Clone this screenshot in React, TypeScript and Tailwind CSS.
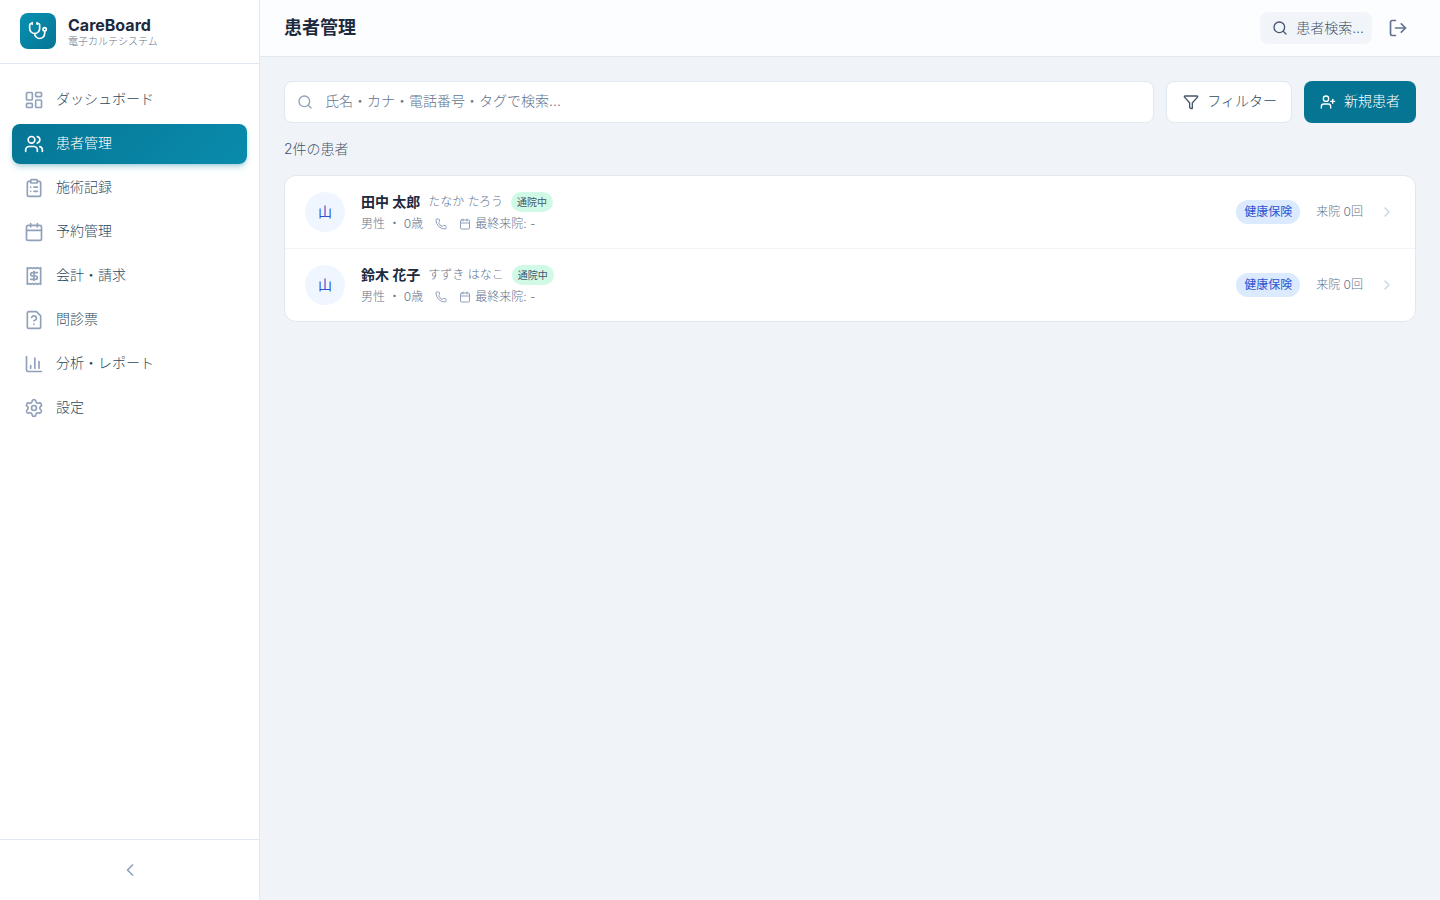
import {
  Calendar,
  ChevronLeft,
  ChevronRight,
  ClipboardList,
  Funnel,
  LayoutDashboard,
  LogOut,
  Phone,
  Search,
  Settings,
  Stethoscope,
  UserPlus,
  Users,
} from "lucide-react";
import { useState } from "react";
import type { ReactNode } from "react";
import clsx from "clsx";

type Patient = {
  id: string;
  name: string;
  kana: string;
  gender: string;
  age: number;
  status: string;
  insurance: string;
  lastVisit?: string;
  visits: number;
};

const PATIENTS: Patient[] = [
  { id: "p1", name: "田中 太郎", kana: "たなか たろう", gender: "男性", age: 0, status: "通院中", insurance: "健康保険", visits: 0 },
  { id: "p2", name: "鈴木 花子", kana: "すずき はなこ", gender: "男性", age: 0, status: "通院中", insurance: "健康保険", visits: 0 },
];

function LineIcon({ children }: { children: ReactNode }) {
  return (
    <svg viewBox="0 0 24 24" className="size-5" fill="none" stroke="currentColor" strokeWidth="2" strokeLinecap="round" strokeLinejoin="round" aria-hidden="true">
      {children}
    </svg>
  );
}

// receipt with a dollar sign
function BillingIcon() {
  return (
    <LineIcon>
      <path d="M4 2v20l2-1 2 1 2-1 2 1 2-1 2 1 2-1 2 1V2l-2 1-2-1-2 1-2-1-2 1-2-1-2 1Z" />
      <path d="M16 8h-6a2 2 0 1 0 0 4h4a2 2 0 1 1 0 4H8" />
      <path d="M12 17.5V6.5" />
    </LineIcon>
  );
}

function QuestionnaireIcon() {
  return (
    <LineIcon>
      <path d="M15 2H6a2 2 0 0 0-2 2v16a2 2 0 0 0 2 2h12a2 2 0 0 0 2-2V7Z" />
      <path d="M9.1 9a3 3 0 0 1 5.82 1c0 2-3 3-3 3" />
      <path d="M12 17h.01" />
    </LineIcon>
  );
}

function AnalyticsIcon() {
  return (
    <LineIcon>
      <path d="M3 3v16a2 2 0 0 0 2 2h16" />
      <path d="M18 17V9" />
      <path d="M13 17V5" />
      <path d="M8 17v-3" />
    </LineIcon>
  );
}

const NAV = [
  { id: "dashboard", label: "ダッシュボード", icon: <LayoutDashboard className="size-5" /> },
  { id: "patients", label: "患者管理", icon: <Users className="size-5" /> },
  { id: "records", label: "施術記録", icon: <ClipboardList className="size-5" /> },
  { id: "calendar", label: "予約管理", icon: <Calendar className="size-5" /> },
  { id: "billing", label: "会計・請求", icon: <BillingIcon /> },
  { id: "questionnaire", label: "問診票", icon: <QuestionnaireIcon /> },
  { id: "analytics", label: "分析・レポート", icon: <AnalyticsIcon /> },
  { id: "settings", label: "設定", icon: <Settings className="size-5" /> },
];

function Sidebar() {
  return (
    <aside className="sticky top-0 flex h-screen w-65 shrink-0 flex-col border-r border-slate-200 bg-white">
      <div className="flex h-16 items-center gap-3 border-b border-slate-200 px-5 pb-px">
        <div className="flex size-9 items-center justify-center rounded-lg bg-linear-135 from-[#0891b2] to-[#067594] text-white">
          <Stethoscope className="size-5" />
        </div>
        <div>
          <div className="text-base leading-5 font-bold text-slate-800">CareBoard</div>
          <div className="text-[10px] leading-3 font-light text-slate-500">電子カルテシステム</div>
        </div>
      </div>

      <nav className="flex flex-1 flex-col gap-1 px-3 py-4">
        {NAV.map((item) => {
          const active = item.id === "patients";
          return (
            <a
              key={item.id}
              href={`#${item.id}`}
              aria-current={active ? "page" : undefined}
              className={clsx(
                "flex h-10 items-center gap-3 rounded-lg px-3 text-sm font-light",
                active ? "bg-linear-135 from-[#067594] to-[#0a8cad] text-white shadow-md shadow-cyan-700/25" : "text-[#2c4a60] hover:bg-slate-50",
              )}
            >
              <span className={active ? "text-white" : "text-slate-400"}>{item.icon}</span>
              <span className="pb-0.5">{item.label}</span>
            </a>
          );
        })}
      </nav>

      <div className="border-t border-slate-200 p-3">
        <button type="button" aria-label="サイドバーを閉じる" className="flex h-9 w-full items-center justify-center rounded-lg text-slate-400 hover:bg-slate-50">
          <ChevronLeft className="size-5" />
        </button>
      </div>
    </aside>
  );
}

function PatientRow({ patient }: { patient: Patient }) {
  return (
    <li>
      <a href={`#patients/${patient.id}`} className="flex items-center gap-4 px-5 py-4 hover:bg-slate-50">
        <span className="flex size-10 shrink-0 items-center justify-center rounded-full bg-blue-50 text-sm text-[#3155cf]">山</span>
        <div className="min-w-0 flex-1">
          <div className="flex items-center gap-2">
            <span className="text-sm font-bold text-slate-800">{patient.name}</span>
            <span className="text-xs font-light text-slate-500">{patient.kana}</span>
            <span className="rounded-full bg-emerald-100 px-1.5 text-[10px] leading-5 text-slate-600">{patient.status}</span>
          </div>
          <div className="mt-1 flex items-center gap-3 text-xs font-light text-slate-500">
            <span>{patient.gender} ・ {patient.age}歳</span>
            <Phone className="size-3 text-slate-400" />
            <span className="flex items-center gap-1">
              <Calendar className="size-3 text-slate-400" />
              最終来院: {patient.lastVisit ?? "-"}
            </span>
          </div>
        </div>
        <span className="rounded-full bg-blue-100 px-2 py-1 text-xs text-[#3155cf]">{patient.insurance}</span>
        <span className="text-xs font-light text-slate-500">来院 {patient.visits}回</span>
        <ChevronRight className="size-4 text-slate-300" />
      </a>
    </li>
  );
}

export default function App() {
  const [query, setQuery] = useState("");
  const patients = PATIENTS.filter((p) => (p.name + p.kana).includes(query));

  return (
    <div className="flex min-h-screen bg-[#f0f4f8] font-['Inter','Noto_Sans_CJK_JP',sans-serif]">
      <Sidebar />

      <div className="min-w-0 flex-1">
        <header className="flex items-center justify-between border-b border-slate-200 bg-[#fcfdfe] px-6 py-3">
          <h1 className="text-lg leading-8 font-bold text-slate-800">患者管理</h1>
          <div className="flex items-center gap-2">
            <button type="button" className="flex h-8 items-center gap-2 rounded-lg bg-slate-100 pr-2 pl-3 text-sm font-light text-slate-600">
              <Search className="size-4" />
              患者検索...
            </button>
            <button type="button" aria-label="ログアウト" className="flex h-8 w-9 items-center justify-center rounded-lg text-slate-500">
              <LogOut className="size-5" />
            </button>
          </div>
        </header>

        <main className="p-6">
          <div className="flex gap-3">
            <label className="flex h-[42px] flex-1 items-center gap-3 rounded-lg border border-slate-200 bg-white px-3">
              <Search className="size-4 text-slate-400" />
              <input
                type="text"
                aria-label="患者を検索"
                value={query}
                onChange={(e) => setQuery(e.target.value)}
                placeholder="氏名・カナ・電話番号・タグで検索..."
                className="min-w-0 flex-1 pb-0.5 text-sm font-light text-slate-800 outline-none placeholder:text-slate-500"
              />
            </label>
            <button type="button" className="flex items-center gap-2 rounded-lg border border-slate-200 bg-white pr-3.5 pl-4 text-sm font-light text-[#2c4a60]">
              <Funnel className="size-4 text-slate-600" />
              <span className="pb-0.5">フィルター</span>
            </button>
            <button type="button" className="flex items-center gap-2 rounded-lg bg-[#067594] px-4 text-sm font-light text-white">
              <UserPlus className="size-4" />
              <span className="pb-0.5">新規患者</span>
            </button>
          </div>

          <p className="mt-4 text-sm font-light text-slate-600">{patients.length}件の患者</p>

          <ul className="mt-4 divide-y divide-slate-100 overflow-hidden rounded-xl border border-slate-200 bg-white">
            {patients.map((p) => (
              <PatientRow key={p.id} patient={p} />
            ))}
          </ul>
        </main>
      </div>
    </div>
  );
}
